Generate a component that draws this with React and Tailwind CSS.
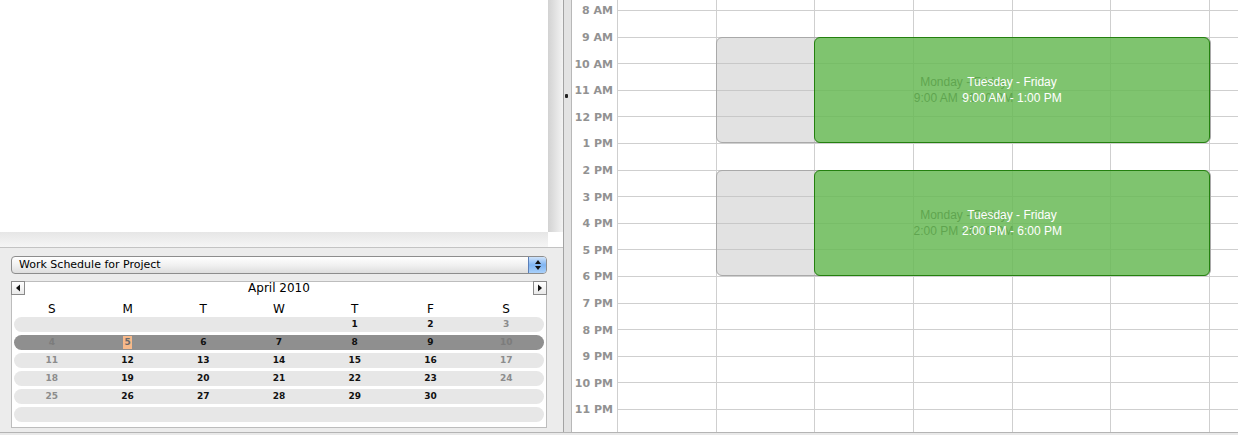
import React from "react";

const hours = [
  "8 AM", "9 AM", "10 AM", "11 AM", "12 PM", "1 PM", "2 PM", "3 PM",
  "4 PM", "5 PM", "6 PM", "7 PM", "8 PM", "9 PM", "10 PM", "11 PM",
];

const weekdays = ["S", "M", "T", "W", "T", "F", "S"];

const weeks = [
  [null, null, null, null, 1, 2, 3],
  [4, 5, 6, 7, 8, 9, 10],
  [11, 12, 13, 14, 15, 16, 17],
  [18, 19, 20, 21, 22, 23, 24],
  [25, 26, 27, 28, 29, 30, null],
  [null, null, null, null, null, null, null],
];

const ui = { fontFamily: '"DejaVu Sans", "Liberation Sans", sans-serif' };
const helv = { fontFamily: '"Liberation Sans", Arial, sans-serif' };

function ArrowButton({ dir }) {
  return (
    <div className="flex h-[14px] w-[14px] items-center justify-center border border-[#8a8a8a] bg-gradient-to-b from-white to-[#e9e9e9]">
      <svg width="6" height="8" viewBox="0 0 6 8">
        {dir === "left" ? (
          <path d="M5 0.5 L1 4 L5 7.5 Z" fill="#111" />
        ) : (
          <path d="M1 0.5 L5 4 L1 7.5 Z" fill="#111" />
        )}
      </svg>
    </div>
  );
}

function WeekRow({ days, selected }) {
  return (
    <div
      className={`grid h-[15px] grid-cols-7 items-center rounded-full text-[9px] font-bold leading-none ${
        selected ? "bg-[#8f8f8f]" : "bg-[#e7e7e7]"
      }`}
      style={ui}
    >
      {days.map((d, i) => {
        const weekend = i === 0 || i === 6;
        let color = weekend ? "text-[#8c8c8c]" : "text-[#111]";
        if (selected && weekend) color = "text-[#7c7c7c]";
        return (
          <div key={i} className={`flex justify-center ${color}`}>
            {d === 5 ? (
              <span className="bg-[#f7b98a] px-[1px] py-[2px] text-[#6a6a6a]">5</span>
            ) : (
              d ?? ""
            )}
          </div>
        );
      })}
    </div>
  );
}

function Event({ top, left, width, title, time, ghost }) {
  return (
    <div
      className={`absolute flex h-[106.4px] flex-col items-center justify-center rounded-[6px] border text-[12px] leading-[16px] ${
        ghost
          ? "border-[#a9a9a9] bg-[rgba(190,190,190,0.45)] text-[#666]"
          : "border-[#24800f] bg-[rgba(93,185,72,0.75)] text-white"
      }`}
      style={{ top, left, width, ...helv }}
    >
      <div>{title}</div>
      <div>{time}</div>
    </div>
  );
}

export default function App() {
  return (
    <div className="flex h-[435px] w-[1238px] flex-col overflow-hidden bg-white">
      <div className="flex h-[433px] border-b border-[#b4b4b4]">
        {/* left side */}
        <div className="flex w-[563px] flex-col">
          <div className="flex h-[248px] flex-col border-b border-[#c3c3c3]">
            <div className="flex h-[232px]">
              <div className="flex-1 bg-white" />
              <div className="w-[15px] bg-gradient-to-r from-[#d2d2d2] to-[#f3f3f3]" />
            </div>
            <div className="flex flex-1">
              <div className="flex-1 bg-gradient-to-b from-[#e6e6e6] to-[#f5f5f5]" />
              <div className="w-[15px] bg-white" />
            </div>
          </div>

          <div className="flex flex-1 flex-col bg-[#ececec] pl-[11px] pr-[16px] pt-[8px]">
            {/* select */}
            <div className="flex h-[18px] overflow-hidden rounded-[4px] border border-[#8d8d8d] bg-gradient-to-b from-white via-[#f1f1f1] to-[#dedede]">
              <div className="flex flex-1 items-center pl-[7px] text-[11px] text-black" style={ui}>
                Work Schedule for Project
              </div>
              <div className="flex w-[18px] flex-col items-center justify-center gap-[2px] border-l border-[#5b7fb8] bg-gradient-to-b from-[#cfe3fa] via-[#7fb4f2] to-[#a9d0fa]">
                <svg width="6" height="4" viewBox="0 0 6 4">
                  <path d="M3 0 L6 4 L0 4 Z" fill="#111" />
                </svg>
                <svg width="6" height="4" viewBox="0 0 6 4">
                  <path d="M0 0 L6 0 L3 4 Z" fill="#111" />
                </svg>
              </div>
            </div>

            {/* month calendar */}
            <div className="mt-[7px] flex flex-col border border-[#bdbdbd] bg-white px-[2px] pb-[5px]">
              <div className="-mx-[3px] -mt-px flex h-[14px] items-center justify-between">
                <ArrowButton dir="left" />
                <div className="text-[12px] leading-none text-black" style={ui}>
                  April 2010
                </div>
                <ArrowButton dir="right" />
              </div>
              <div className="grid h-[22px] grid-cols-7 pt-[8px] text-[12px] leading-[12px] text-black" style={ui}>
                {weekdays.map((w, i) => (
                  <div key={i} className="text-center">
                    {w}
                  </div>
                ))}
              </div>
              <div className="flex flex-col gap-[3px]">
                {weeks.map((days, i) => (
                  <WeekRow key={i} days={days} selected={i === 1} />
                ))}
              </div>
            </div>
          </div>
        </div>

        {/* splitter */}
        <div className="flex w-[9px] flex-col border-x border-l-[#a3a3a3] border-r-[#b8b8b8] bg-[#e3e3e3]">
          <div className="ml-[1px] mt-[94px] h-[4px] w-[3px] rounded-[1px] bg-[#222]" />
        </div>

        {/* day calendar */}
        <div className="flex flex-1 overflow-hidden">
          <div className="flex w-[45px] flex-col">
            <div className="-mt-[1.6px] flex flex-col">
              {hours.map((h) => (
                <div
                  key={h}
                  className="flex h-[26.6px] shrink-0 items-center justify-end pr-[4px] text-[11px] font-bold text-[#929292]"
                  style={ui}
                >
                  {h}
                </div>
              ))}
            </div>
          </div>

          <div className="relative flex-1 border-l border-[#cfcfcf]">
            <div className="flex flex-col">
              <div className="h-[10px] shrink-0" />
              {hours.map((h) => (
                <div key={h} className="h-[26.6px] shrink-0 border-t border-[#cfcfcf]" />
              ))}
            </div>
            <div className="absolute inset-y-0 left-0 flex">
              {[0, 1, 2, 3, 4, 5, 6].map((c) => (
                <div key={c} className="w-[98.67px] shrink-0 border-r border-[#cfcfcf]" />
              ))}
            </div>

            <Event ghost top={36.6} left={98} width={495} title="Monday - Friday" time="9:00 AM - 1:00 PM" />
            <Event top={36.6} left={196} width={396} title="Tuesday - Friday" time="9:00 AM - 1:00 PM" />
            <Event ghost top={169.6} left={98} width={495} title="Monday - Friday" time="2:00 PM - 6:00 PM" />
            <Event top={169.6} left={196} width={396} title="Tuesday - Friday" time="2:00 PM - 6:00 PM" />
          </div>
        </div>
      </div>
      <div className="flex-1 bg-[#e9e9e9]" />
    </div>
  );
}
